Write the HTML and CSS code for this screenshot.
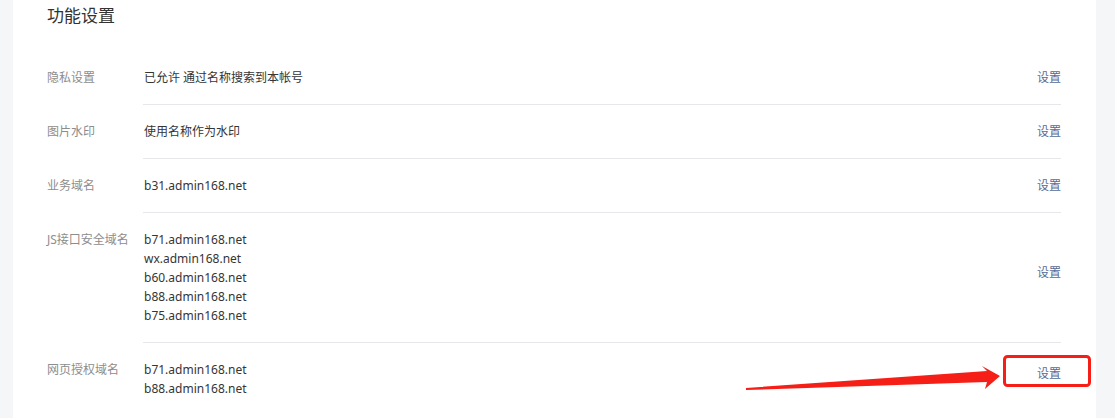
FILE: index.html
```html
<!DOCTYPE html>
<html>
<head>
  <meta charset="utf-8">
  <title>功能设置</title>
  <link rel="stylesheet" href="styles.css">
</head>
<body>
  <div class="card">
    <h2 class="title">功能设置</h2>

    <div class="row">
      <div class="label">隐私设置</div>
      <div class="content">
        <div class="value">已允许 通过名称搜索到本帐号</div>
        <a class="action">设置</a>
      </div>
    </div>

    <div class="row">
      <div class="label">图片水印</div>
      <div class="content">
        <div class="value">使用名称作为水印</div>
        <a class="action">设置</a>
      </div>
    </div>

    <div class="row">
      <div class="label">业务域名</div>
      <div class="content">
        <div class="value">b31.admin168.net</div>
        <a class="action">设置</a>
      </div>
    </div>

    <div class="row row-multi">
      <div class="label">JS接口安全域名</div>
      <div class="content">
        <div class="value">
          b71.admin168.net<br>
          wx.admin168.net<br>
          b60.admin168.net<br>
          b88.admin168.net<br>
          b75.admin168.net
        </div>
        <a class="action">设置</a>
      </div>
    </div>

    <div class="row row-multi row-last">
      <div class="label">网页授权域名</div>
      <div class="content">
        <div class="value">
          b71.admin168.net<br>
          b88.admin168.net
        </div>
        <a class="action">设置</a>
      </div>
    </div>
  </div>

  <!-- annotation drawn on top of the screenshot -->
  <svg class="mark" width="1115" height="418" viewBox="0 0 1115 418">
    <polygon points="746,388 987,371 982,366 1000,376 985,389 987,382 746,390" fill="#f51f17"/>
    <rect x="1004.5" y="356.5" width="85" height="29" rx="3" fill="none" stroke="#f51f17" stroke-width="3"/>
  </svg>
</body>
</html>
```

FILE: styles.css
```css
body {
  margin: 0;
  background-color: #f5f6f8;
  font-family: "Noto Sans", "Noto Sans CJK SC", sans-serif;
  font-size: 12px;
  color: #353535;
  position: relative;
  height: 418px;
  overflow: hidden;
}

.card {
  margin: 0 19px 0 13px;
  padding: 0 35px 0 34px;
  background-color: #fff;
  height: 418px;
}

.title {
  margin: 0;
  height: 51px;
  line-height: 32px;
  font-size: 17px;
  font-weight: normal;
  color: #333;
}

.row {
  display: flex;
}

.label {
  width: 96px;
  flex-shrink: 0;
  padding: 17px 0;
  line-height: 19px;
  color: #8d8d8d;
}

.content {
  flex: 1;
  display: flex;
  justify-content: space-between;
  align-items: center;
  padding: 17px 0;
  line-height: 19px;
  border-bottom: 1px solid #e7e7eb;
}

.row-last .content {
  border-bottom: none;
}

.value {
  padding-left: 1px;
}

.action {
  color: #576b95;
  cursor: pointer;
}

.row-multi .action {
  margin-bottom: 11px;
}

.mark {
  position: absolute;
  left: 0;
  top: 0;
  pointer-events: none;
}
```
